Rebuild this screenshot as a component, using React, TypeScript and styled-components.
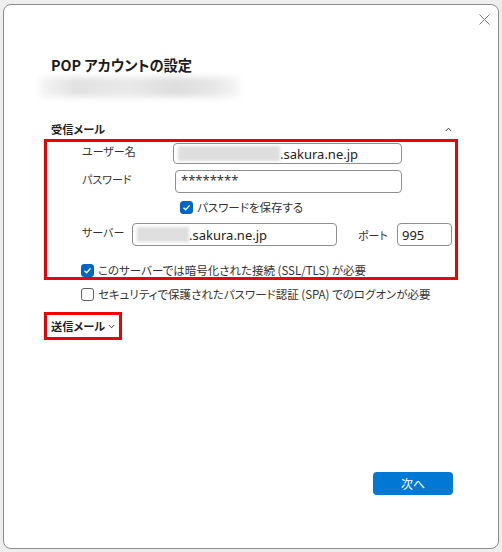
import React from 'react';
import styled, { createGlobalStyle } from 'styled-components';

const GlobalStyle = createGlobalStyle`
  html, body {
    margin: 0;
    padding: 0;
    background: #eeeeee;
  }
  body {
    font-family: "Noto Sans CJK JP", "Noto Sans", sans-serif;
    font-feature-settings: "palt";
    color: #1f1f1f;
  }
`;

const Page = styled.div`
  width: 502px;
  height: 552px;
  padding: 4px 3px 3px 3px;
  box-sizing: border-box;
`;

const Dialog = styled.div`
  width: 496px;
  height: 545px;
  box-sizing: border-box;
  background: #ffffff;
  border: 1px solid #8c8c8c;
  border-radius: 8px;
  display: flex;
  flex-direction: column;
`;

const TopBar = styled.div`
  display: flex;
  justify-content: flex-end;
  padding: 9px 8px 0 0;
  height: 20px;
  box-sizing: border-box;
`;

const CloseButton = styled.button`
  border: none;
  background: none;
  padding: 0;
  width: 11px;
  height: 11px;
  display: flex;
  color: #7a7a7a;
`;

const Body = styled.div`
  padding: 0 46px 0 47px;
  display: flex;
  flex-direction: column;
`;

const Title = styled.h1`
  margin: 30px 0 0 0;
  font-size: 14.3px;
  line-height: 20px;
  font-weight: 700;
  color: #1a1a1a;
`;

const BlurredLine = styled.div`
  margin: 2px 0 0 -11px;
  width: 200px;
  height: 20px;
  background: linear-gradient(90deg, #f5f5f5 0%, #e2e2e2 18%, #e9e9e9 45%, #dddddd 68%, #e8e8e8 88%, #f7f7f7 100%);
  filter: blur(3px);
`;

const SectionHeader = styled.div`
  margin-top: 24px;
  height: 16px;
  display: flex;
  align-items: center;
  justify-content: space-between;
`;

const SectionTitle = styled.span`
  font-size: 11.2px;
  font-weight: 700;
  line-height: 16px;
  display: inline-flex;
  align-items: center;
  gap: 3px;
`;

const Highlight = styled.div<{ $inline?: boolean }>`
  border: 3px solid #ee0000;
  box-sizing: border-box;
  ${(p) => (p.$inline ? 'align-self: flex-start;' : '')}
`;

const IncomingBox = styled(Highlight)`
  margin: 2px -6px 0 -7px;
  height: 141px;
  padding: 1px 0 0 35px;
  display: flex;
  flex-direction: column;
`;

const Row = styled.div<{ $top: number; $height: number }>`
  margin-top: ${(p) => p.$top}px;
  height: ${(p) => p.$height}px;
  display: flex;
  align-items: center;
`;

const Label = styled.span<{ $width: number }>`
  width: ${(p) => p.$width}px;
  flex: none;
  font-size: 11px;
  color: #333333;
  line-height: 16px;
  margin-top: -6px;
`;

const Field = styled.div<{ $width: number; $offset?: number }>`
  width: ${(p) => p.$width}px;
  height: 100%;
  margin-left: ${(p) => p.$offset ?? 0}px;
  box-sizing: border-box;
  border: 1px solid #8f8f8f;
  border-radius: 4px;
  display: flex;
  align-items: center;
  padding-left: 4px;
  font-family: "Noto Sans", "Noto Sans CJK JP", sans-serif;
  font-size: 13px;
  color: #222222;
  overflow: hidden;
  white-space: nowrap;
`;

const Masked = styled.span<{ $width: number }>`
  display: inline-block;
  width: ${(p) => p.$width}px;
  height: 15px;
  background: #dedede;
  filter: blur(1.5px);
  flex: none;
`;

const Stars = styled.span`
  font-size: 13px;
  margin: -4px 0 0 1px;
  color: #333;
`;

const CheckRow = styled.label<{ $indent: number; $top: number }>`
  margin: ${(p) => p.$top}px 0 0 ${(p) => p.$indent}px;
  height: 14px;
  display: flex;
  align-items: center;
  gap: 4px;
  font-size: 11.5px;
  color: #333333;
  white-space: nowrap;
`;

const Box = styled.span<{ $checked: boolean }>`
  width: 13px;
  height: 13px;
  box-sizing: border-box;
  border-radius: 3px;
  flex: none;
  display: flex;
  align-items: center;
  justify-content: center;
  background: ${(p) => (p.$checked ? '#0067c0' : '#ffffff')};
  border: 1px solid ${(p) => (p.$checked ? '#0067c0' : '#5f5f5f')};
`;

const OutgoingBox = styled(Highlight)`
  margin: 11px 0 0 -7px;
  height: 28px;
  padding: 0 4px 0 4px;
  display: flex;
  align-items: center;
`;

const Footer = styled.div`
  margin-top: auto;
  display: flex;
  justify-content: flex-end;
  padding: 0 45px 53px 0;
`;

const NextButton = styled.button`
  width: 80px;
  height: 23px;
  border: none;
  border-radius: 4px;
  background: #0078d4;
  color: #ffffff;
  font-family: "Noto Sans CJK JP", sans-serif;
  font-size: 12px;
  padding: 0;
`;

const Chevron = ({ up }: { up?: boolean }) => (
  <svg width="7" height="5" viewBox="0 0 7 5">
    <path
      d={up ? 'M0.8 4 L3.5 1.2 L6.2 4' : 'M0.8 1 L3.5 3.8 L6.2 1'}
      fill="none"
      stroke="#444"
      strokeWidth="1"
    />
  </svg>
);

const Check = ({ checked }: { checked: boolean }) => (
  <Box $checked={checked}>
    {checked && (
      <svg width="9" height="9" viewBox="0 0 9 9">
        <path d="M1.5 4.8 L3.6 6.8 L7.6 2.4" fill="none" stroke="#fff" strokeWidth="1.4" />
      </svg>
    )}
  </Box>
);

export default function App() {
  return (
    <>
      <GlobalStyle />
      <Page>
        <Dialog>
          <TopBar>
            <CloseButton aria-label="閉じる">
              <svg width="11" height="11" viewBox="0 0 11 11">
                <path d="M0.5 0.5 L10.5 10.5 M10.5 0.5 L0.5 10.5" stroke="currentColor" strokeWidth="1" />
              </svg>
            </CloseButton>
          </TopBar>
          <Body>
            <Title>POP アカウントの設定</Title>
            <BlurredLine />
            <SectionHeader>
              <SectionTitle>受信メール</SectionTitle>
              <Chevron up />
            </SectionHeader>
            <IncomingBox>
              <Row $top={0} $height={21}>
                <Label $width={91}>ユーザー名</Label>
                <Field $width={229}>
                  <Masked $width={102} />
                  .sakura.ne.jp
                </Field>
              </Row>
              <Row $top={6} $height={23}>
                <Label $width={91}>パスワード</Label>
                <Field $width={227} $offset={2}>
                  <Stars>********</Stars>
                </Field>
              </Row>
              <CheckRow $indent={98} $top={7}>
                <Check checked />
                パスワードを保存する
              </CheckRow>
              <Row $top={9} $height={23}>
                <Label $width={50}>サーバー</Label>
                <Field $width={205}>
                  <Masked $width={52} />
                  .sakura.ne.jp
                </Field>
                <Label $width={39} style={{ marginLeft: 21, marginTop: 0 }}>ポート</Label>
                <Field $width={55}>995</Field>
              </Row>
              <CheckRow $indent={-1} $top={17}>
                <Check checked />
                このサーバーでは暗号化された接続 (SSL/TLS) が必要
              </CheckRow>
            </IncomingBox>
            <CheckRow $indent={30} $top={7}>
              <Check checked={false} />
              セキュリティで保護されたパスワード認証 (SPA) でのログオンが必要
            </CheckRow>
            <OutgoingBox $inline>
              <SectionTitle>
                送信メール
                <Chevron />
              </SectionTitle>
            </OutgoingBox>
          </Body>
          <Footer>
            <NextButton>次へ</NextButton>
          </Footer>
        </Dialog>
      </Page>
    </>
  );
}
